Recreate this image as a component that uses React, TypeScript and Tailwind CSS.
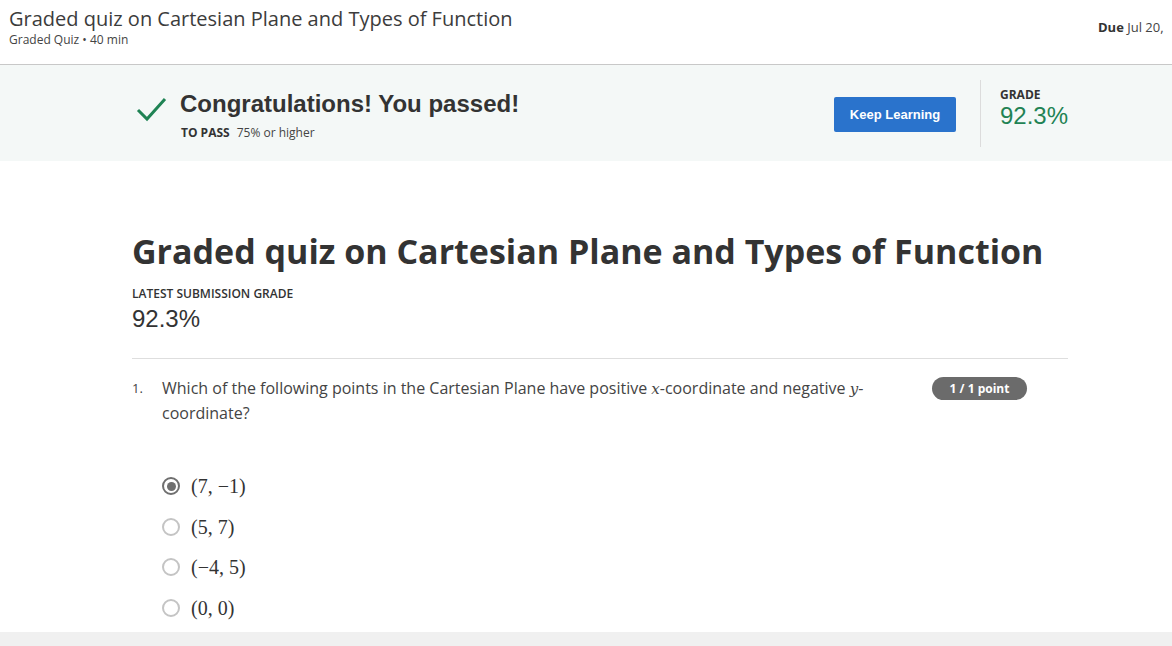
import React from "react";

const options = [
  { label: "(7, −1)", checked: true },
  { label: "(5, 7)", checked: false },
  { label: "(−4, 5)", checked: false },
  { label: "(0, 0)", checked: false },
];

function Radio({ checked }: { checked: boolean }) {
  if (checked) {
    return (
      <span className="flex h-[18px] w-[18px] items-center justify-center rounded-full border-2 border-[#6f6f6f]">
        <span className="h-[9px] w-[9px] rounded-full bg-[#6f6f6f]" />
      </span>
    );
  }
  return <span className="block h-[18px] w-[18px] rounded-full border-2 border-[#c4c4c4]" />;
}

export default function App() {
  return (
    <div className="w-[1172px] h-[646px] overflow-hidden bg-white text-[#333] font-['Open_Sans',sans-serif]">
      {/* header */}
      <div className="flex h-[65px] border-b border-[#c8c8c8] pl-[9px]">
        <div className="flex-1 pt-[5px]">
          <h1 className="text-[20px] leading-[28px] text-[#3c3c3c]">Graded quiz on Cartesian Plane and Types of Function</h1>
          <p className="text-[12px] leading-[16px] text-[#444] mt-[-1px]">Graded Quiz • 40 min</p>
        </div>
        <div className="w-[74px] shrink-0 whitespace-nowrap pt-[18px] text-[13px] text-[#444]">
          <span className="font-bold text-[#333]">Due</span> Jul 20,
        </div>
      </div>

      {/* passed banner */}
      <div className="h-[96px] bg-[#f4f8f7]">
        <div className="ml-[132px] w-[936px] flex h-full items-start">
          <div className="flex flex-1 pt-[26px]">
            <svg width="34" height="30" viewBox="0 0 34 30" className="ml-[3px] mt-[2px]">
              <polyline points="3,17 12,26 30,6" fill="none" stroke="#1f8354" strokeWidth="3" />
            </svg>
            <div className="ml-[11px]">
              <div className="font-['Liberation_Sans',Arial,sans-serif] text-[24px] font-bold leading-[26px] text-[#333]">
                Congratulations! You passed!
              </div>
              <div className="mt-[8px] ml-[1px] text-[12px] leading-[16px] text-[#444]">
                <span className="font-bold text-[#333]">TO PASS</span>
                <span className="ml-[7px]">75% or higher</span>
              </div>
            </div>
          </div>
          <button className="mt-[32px] h-[35px] w-[122px] rounded-[2px] bg-[#2a73cc] text-[13px] font-bold text-white font-['Liberation_Sans',Arial,sans-serif]">
            Keep Learning
          </button>
          <div className="ml-[24px] mt-[15px] h-[67px] w-px bg-[#dcdcdc]" />
          <div className="ml-[19px] w-[68px] pt-[23px]">
            <div className="text-[12px] font-bold leading-[14px] text-[#333]">GRADE</div>
            <div className="font-['Liberation_Sans',Arial,sans-serif] text-[24px] leading-[28px] text-[#1f8354]">92.3%</div>
          </div>
        </div>
      </div>

      {/* main content */}
      <div className="h-[471px]">
        <div className="ml-[132px] w-[936px] pt-[67px]">
          <h2 className="text-[34px] font-bold leading-[46px] text-[#333]">
            Graded quiz on Cartesian Plane and Types of Function
          </h2>
          <div className="mt-[12px] text-[12px] font-semibold leading-[16px] text-[#333]">LATEST SUBMISSION GRADE</div>
          <div className="mt-[2px] font-['Liberation_Sans',Arial,sans-serif] text-[24px] leading-[30px] text-[#333]">92.3%</div>
          <div className="mt-[24px] h-px bg-[#dedede]" />

          <div className="flex mt-[17px]">
            <div className="w-[30px] text-[13px] leading-[25px] text-[#444]">1.</div>
            <div className="w-[740px] text-[16px] leading-[25px] text-[#444]">
              Which of the following points in the Cartesian Plane have positive{" "}
              <span className="font-['DejaVu_Serif',serif] italic text-[15px] leading-[20px]">x</span>-coordinate and negative{" "}
              <span className="font-['DejaVu_Serif',serif] italic text-[15px] leading-[20px]">y</span>-coordinate?
            </div>
            <div className="ml-[30px] mt-[1px] h-[23px] w-[95px] rounded-full bg-[#6b6b6b] text-center text-[12px] font-bold leading-[23px] text-white">
              1 / 1 point
            </div>
          </div>

          <div className="ml-[30px] mt-[51px] flex flex-col gap-[22.5px]">
            {options.map((o, i) => (
              <label key={i} className="flex h-[18px] items-center">
                <Radio checked={o.checked} />
                <span className="ml-[11px] font-['Liberation_Serif','Times_New_Roman',serif] text-[20px] leading-[18px] text-[#333]">
                  {o.label}
                </span>
              </label>
            ))}
          </div>
        </div>
      </div>

      <div className="h-[14px] bg-[#f0f0f0]" />
    </div>
  );
}
